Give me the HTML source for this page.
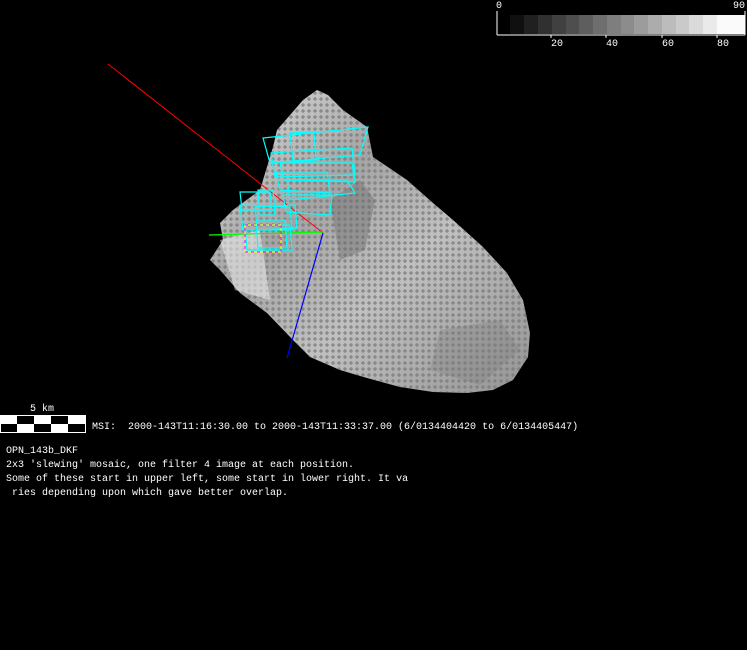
<!DOCTYPE html>
<html><head><meta charset="utf-8"><style>
html,body{margin:0;padding:0;background:#000;width:747px;height:650px;overflow:hidden}
.t{position:absolute;font-family:"Liberation Mono",monospace;font-size:10px;color:#fff;white-space:pre;line-height:14px}
</style></head><body>
<svg width="747" height="650" style="position:absolute;left:0;top:0">
<defs>
<linearGradient id="g" x1="0" y1="0" x2="1" y2="1">
<stop offset="0" stop-color="#e0e0e0"/><stop offset="0.35" stop-color="#a4a4a4"/><stop offset="0.6" stop-color="#c0c0c0"/><stop offset="1" stop-color="#949494"/>
</linearGradient>
<pattern id="p" width="6" height="6" patternUnits="userSpaceOnUse"><path d="M1 3h4M3 1v4" stroke="#7a7a7a" stroke-width="1"/></pattern>
</defs>
<g>
<line x1="497" y1="11" x2="497" y2="35" stroke="#fff"/>
<line x1="745" y1="11" x2="745" y2="35" stroke="#fff"/>
<line x1="497" y1="35" x2="745" y2="35" stroke="#fff"/>
<line x1="551" y1="35" x2="551" y2="38" stroke="#fff"/><line x1="606" y1="35" x2="606" y2="38" stroke="#fff"/><line x1="662" y1="35" x2="662" y2="38" stroke="#fff"/><line x1="717" y1="35" x2="717" y2="38" stroke="#fff"/>
<rect x="510" y="15" width="14" height="19" fill="#101010"/><rect x="524" y="15" width="14" height="19" fill="#202020"/><rect x="538" y="15" width="14" height="19" fill="#303030"/><rect x="552" y="15" width="14" height="19" fill="#404040"/><rect x="566" y="15" width="13" height="19" fill="#4e4e4e"/><rect x="579" y="15" width="14" height="19" fill="#5e5e5e"/><rect x="593" y="15" width="14" height="19" fill="#6e6e6e"/><rect x="607" y="15" width="14" height="19" fill="#7e7e7e"/><rect x="621" y="15" width="13" height="19" fill="#8c8c8c"/><rect x="634" y="15" width="14" height="19" fill="#9c9c9c"/><rect x="648" y="15" width="14" height="19" fill="#acacac"/><rect x="662" y="15" width="14" height="19" fill="#bcbcbc"/><rect x="676" y="15" width="13" height="19" fill="#cacaca"/><rect x="689" y="15" width="14" height="19" fill="#dadada"/><rect x="703" y="15" width="14" height="19" fill="#eaeaea"/><rect x="717" y="15" width="28" height="19" fill="#fafafa"/>
</g>
<polygon points="317,90 328,95 343,110 367,127 373,157 407,180 433,203 453,220 483,247 507,273 523,300 530,333 528,357 513,380 493,390 467,393 433,392 400,387 367,378 340,370 310,357 293,340 267,313 240,293 220,270 210,260 223,240 220,223 233,210 260,190 273,147 277,130 297,107 303,100" fill="url(#g)"/>
<polygon points="317,90 328,95 343,110 367,127 373,157 407,180 433,203 453,220 483,247 507,273 523,300 530,333 528,357 513,380 493,390 467,393 433,392 400,387 367,378 340,370 310,357 293,340 267,313 240,293 220,270 210,260 223,240 220,223 233,210 260,190 273,147 277,130 297,107 303,100" fill="url(#p)"/>
<polygon points="330,200 360,180 375,200 365,250 340,260" fill="#666" opacity="0.4"/>
<polygon points="220,240 260,230 270,300 235,290" fill="#f4f4f4" opacity="0.5"/>
<polygon points="440,330 500,320 520,350 480,385 430,370" fill="#777" opacity="0.3"/>
<line x1="108" y1="64" x2="323" y2="233" stroke="#f00"/>
<line x1="209" y1="235" x2="323" y2="232" stroke="#0f0" stroke-width="1.2"/>
<line x1="323" y1="233" x2="287" y2="358" stroke="#00f" stroke-width="1.2"/>
<g fill="none" stroke="#0ff" stroke-width="1.2">
<polygon points="263,138 368,127 360,155 270,163"/>
<polygon points="290,133 314,132 316,160 293,162"/>
<polygon points="271,153 352,148 355,175 275,177"/>
<polygon points="280,163 352,163 355,182 284,180"/>
<polygon points="276,172 327,172 330,193 280,190"/>
<polygon points="287,180 347,180 355,193 290,200"/>
<polygon points="283,195 332,195 330,215 286,212"/>
<polygon points="240,192 270,192 272,210 242,210"/>
<polygon points="258,190 273,190 275,215 260,215"/>
<polygon points="240,205 290,207 292,230 243,230"/>
<polygon points="255,207 295,205 297,228 257,230"/>
<polygon points="245,225 290,225 292,250 247,250"/>
<polygon points="256,220 285,220 287,248 258,248"/>
</g>
<rect x="245" y="225" width="36" height="27" fill="none" stroke="#f0f" stroke-dasharray="3,3"/>
<rect x="245" y="225" width="36" height="27" fill="none" stroke="#ff0" stroke-dasharray="3,3" stroke-dashoffset="3"/>
<rect x="0.5" y="415.5" width="85" height="17" fill="#fff" stroke="#fff"/>
<rect x="17" y="416" width="17" height="8" fill="#000"/><rect x="51" y="416" width="17" height="8" fill="#000"/>
<rect x="1" y="424" width="16" height="8" fill="#000"/><rect x="34" y="424" width="17" height="8" fill="#000"/><rect x="68" y="424" width="17" height="8" fill="#000"/>
</svg>
<div class="t" style="left:496px;top:0px">0</div>
<div class="t" style="left:733px;top:0px">90</div>
<div class="t" style="left:551px;top:38px">20</div>
<div class="t" style="left:606px;top:38px">40</div>
<div class="t" style="left:662px;top:38px">60</div>
<div class="t" style="left:717px;top:38px">80</div>
<div class="t" style="left:30px;top:403px">5 km</div>
<div class="t" style="left:92px;top:421px">MSI:  2000-143T11:16:30.00 to 2000-143T11:33:37.00 (6/0134404420 to 6/0134405447)</div>
<div class="t" style="left:6px;top:445px">OPN_143b_DKF
2x3 'slewing' mosaic, one filter 4 image at each position.
Some of these start in upper left, some start in lower right. It va
 ries depending upon which gave better overlap.</div>
</body></html>
